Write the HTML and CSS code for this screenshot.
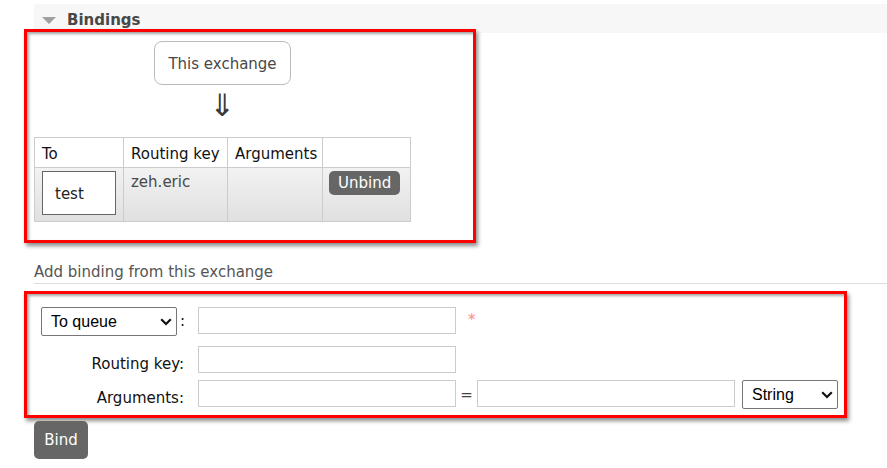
FILE: index.html
```html
<!DOCTYPE html>
<html>
<head>
<meta charset="utf-8">
<link rel="stylesheet" href="styles.css">
</head>
<body>
<div class="page">
  <div class="section-head">
    <span class="tri"></span>
    <h2>Bindings</h2>
  </div>

  <div class="hl hl-bindings">
    <div class="diagram">
      <div class="exch">This exchange</div>
      <div class="arrow">&#8659;</div>
      <table class="bindings">
        <colgroup>
          <col class="c-to"><col class="c-key"><col class="c-args"><col class="c-act">
        </colgroup>
        <thead>
          <tr><th>To</th><th>Routing key</th><th>Arguments</th><th></th></tr>
        </thead>
        <tbody>
          <tr>
            <td><span class="dest">test</span></td>
            <td class="muted">zeh.eric</td>
            <td></td>
            <td><button class="btn unbind">Unbind</button></td>
          </tr>
        </tbody>
      </table>
    </div>
  </div>

  <h3 class="sub">Add binding from this exchange</h3>

  <div class="hl hl-form">
    <div class="row r1">
      <div class="lbl">
        <span class="selwrap sw-dest">
          <select class="sel"><option>To queue</option><option>To exchange</option></select>
          <svg class="chev" viewBox="0 0 12 8" width="12" height="8"><path d="M1.2 1.2 L6 6 L10.8 1.2" fill="none" stroke="#111" stroke-width="2.2"/></svg>
        </span>
        <span class="colon">:</span>
      </div>
      <input class="txt" type="text">
      <span class="req">*</span>
    </div>
    <div class="row r2">
      <label class="lbl">Routing key:</label>
      <input class="txt" type="text">
    </div>
    <div class="row r3">
      <label class="lbl">Arguments:</label>
      <input class="txt" type="text">
      <span class="eq">=</span>
      <input class="txt" type="text">
      <span class="selwrap sw-type">
        <select class="sel"><option>String</option><option>Number</option><option>Boolean</option></select>
        <svg class="chev" viewBox="0 0 12 8" width="12" height="8"><path d="M1.2 1.2 L6 6 L10.8 1.2" fill="none" stroke="#111" stroke-width="2.2"/></svg>
      </span>
    </div>
  </div>

  <button class="btn bind">Bind</button>
</div>
</body>
</html>
```

FILE: styles.css
```css
html, body {
  margin: 0;
  padding: 0;
  background: #fff;
}
body {
  font-family: "DejaVu Sans", Verdana, sans-serif;
  font-size: 15px;
  color: #222;
}
.page {
  padding: 4px 0 0 24px;
}
.section-head {
  margin-left: 10px;
  height: 29px;
  background: #f7f7f7;
  display: flex;
  align-items: center;
}
.tri {
  width: 0;
  height: 0;
  margin-left: 8px;
  margin-top: 3px;
  border-left: 7px solid transparent;
  border-right: 7px solid transparent;
  border-top: 7px solid #a0a0a0;
}
.section-head h2 {
  margin: 0 0 0 11px;
  font-size: 15px;
  font-weight: bold;
  color: #484848;
  line-height: 18px;
  padding-top: 2px;
}
.hl {
  border: 3px solid #f00;
  box-shadow: 2px 3px 4px rgba(0,0,0,0.45), inset 2px 2px 3px rgba(0,0,0,0.35);
  box-sizing: border-box;
}
.hl-bindings {
  width: 452px;
  margin-top: -4px;
  padding: 9px 0 18px 7px;
}
.diagram {
  display: inline-flex;
  flex-direction: column;
  align-items: center;
}
.exch {
  border: 1px solid #bbb;
  border-radius: 8px;
  height: 44px;
  box-sizing: border-box;
  padding: 2px 13px 0 13px;
  line-height: 40px;
  color: #484848;
}
.arrow {
  height: 52px;
  line-height: 40px;
  font-size: 31px;
  color: #3a3a3a;
}
table.bindings {
  border-collapse: collapse;
  table-layout: fixed;
  width: 377px;
}
.c-to { width: 89px; }
.c-key { width: 104px; }
.c-args { width: 95px; }
.c-act { width: 88px; }
.bindings th, .bindings td {
  border: 1px solid #ccc;
  text-align: left;
  vertical-align: top;
}
.bindings th {
  font-weight: normal;
  padding: 7px 7px 4px 7px;
  line-height: 18px;
  color: #111;
  background: #fff;
}
.bindings td {
  padding: 3px 6px 6px 7px;
  line-height: 18px;
}
.bindings tbody tr {
  background: linear-gradient(#f2f2f2, #e0e0e0);
}
.bindings td.muted {
  color: #484848;
  padding-top: 5px;
}
.dest {
  display: block;
  width: 74px;
  height: 44px;
  box-sizing: border-box;
  border: 1px solid #666;
  background: #fff;
  padding: 2px 0 0 12px;
  line-height: 40px;
  color: #222;
}
.btn {
  font-family: "DejaVu Sans", Verdana, sans-serif;
  font-size: 15px;
  color: #fff;
  background: #666;
  border: 0;
  cursor: pointer;
}
.unbind {
  height: 24px;
  padding: 0 9px;
  border-radius: 5px;
  line-height: 24px;
  margin-left: -1px;
}
.sub {
  margin: 20px 0 0 10px;
  padding-bottom: 2px;
  font-size: 15px;
  font-weight: normal;
  line-height: 18px;
  color: #555;
  border-bottom: 1px solid #ddd;
}
.hl-form {
  width: 823px;
  margin-top: 7px;
  padding: 13px 0 5px 14px;
}
.row {
  display: flex;
  align-items: flex-start;
}
.r1 { margin-bottom: 10px; }
.r2 { margin-bottom: 7px; }
.lbl {
  width: 157px;
  height: 27px;
  box-sizing: border-box;
  padding: 10px 14px 0 0;
  text-align: right;
  line-height: 17px;
  color: #111;
}
.r1 .lbl {
  padding: 0;
  display: flex;
  align-items: center;
  height: 29px;
}
.colon {
  margin-left: 3px;
  color: #111;
}
.selwrap {
  position: relative;
  display: block;
  height: 29px;
}
.sw-dest { width: 136px; }
.sw-type { width: 96px; margin-left: 7px; }
.sel {
  -webkit-appearance: none;
  appearance: none;
  display: block;
  width: 100%;
  height: 29px;
  margin: 0;
  box-sizing: border-box;
  border: 1px solid #767676;
  border-radius: 2px;
  padding: 0 0 0 9px;
  font-family: "Liberation Sans", Arial, sans-serif;
  font-size: 16px;
  color: #000;
  background: #fff;
}
.chev {
  position: absolute;
  right: 5px;
  top: 11px;
  pointer-events: none;
}
.txt {
  width: 258px;
  height: 27px;
  box-sizing: border-box;
  border: 1px solid #ccc;
  margin: 0;
  font-size: 15px;
}
.req {
  color: #f88;
  margin-left: 12px;
  line-height: 26px;
  font-size: 15px;
}
.eq {
  width: 21px;
  text-align: center;
  line-height: 30px;
  color: #444;
}
.bind {
  display: block;
  margin: 3px 0 0 10px;
  width: 54px;
  height: 38px;
  border-radius: 5px;
  padding: 0;
}
```
